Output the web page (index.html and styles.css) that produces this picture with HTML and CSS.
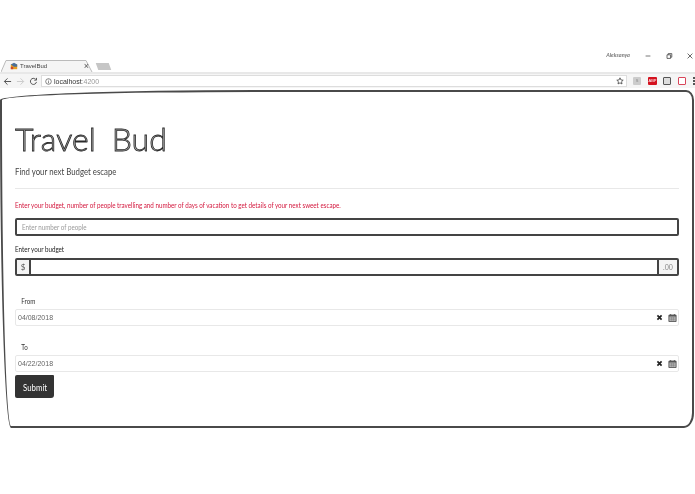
FILE: index.html
```html
<!DOCTYPE html>
<html lang="en">
<head>
<meta charset="utf-8">
<title>TravelBud</title>
<link rel="stylesheet" href="styles.css">
</head>
<body>
<div class="tabbar">
  <div class="tab">
    <svg class="tab-shape" viewBox="0 0 94 12"><path d="M0 12 5 .5H85L91 12" fill="#f5f5f5" stroke="#bbb"/></svg>
    <svg class="favicon" viewBox="0 0 10 10"><rect x="1" y="3" width="8" height="6" fill="#e9a023"/><path d="M1 3 5 1l4 2v3H5z" fill="#4a6f96"/><rect x="1" y="6" width="3" height="3" fill="#c9452c"/></svg>
    <span class="tab-title">TravelBud</span>
    <span class="tab-close">×</span>
  </div>
  <div class="new-tab"></div>
  <div class="win-user">Aleksanya</div>
  <div class="win-controls">
    <svg viewBox="0 0 10 10"><path d="M2 5h6" stroke="#555" fill="none"/></svg>
    <svg viewBox="0 0 10 10"><path d="M2.5 3.5h4.5v4.5h-4.500zM4 3.500v-1.500h4.500v4.500h-1.500" stroke="#444" fill="none"/></svg>
    <svg viewBox="0 0 10 10"><path d="M2 2l6 6M8 2l-6 6" stroke="#444" fill="none"/></svg>
  </div>
</div>
<div class="toolbar">
  <svg class="nav" viewBox="0 0 10 10"><path d="M9 5H1.500M5 1.500 1.500 5 5 8.500" stroke="#555" stroke-width="1.100" fill="none"/></svg>
  <svg class="nav" viewBox="0 0 10 10"><path d="M1 5h7.500M5 1.500 8.500 5 5 8.500" stroke="#ccc" stroke-width="1.100" fill="none"/></svg>
  <svg class="nav" viewBox="0 0 10 10"><path d="M8.300 5.500A3.400 3.400 0 1 1 7.400 2.500M8.300 1v2.500H5.800" stroke="#555" stroke-width="1.100" fill="none"/></svg>
  <div class="omnibox">
    <svg class="info" viewBox="0 0 10 10"><circle cx="5" cy="5" r="4" stroke="#555" fill="none"/><path d="M5 4.500v3M5 2.500v1" stroke="#555"/></svg>
    <span class="url">localhost<span class="port">:4200</span></span>
    <svg class="star" viewBox="0 0 10 10"><path d="M5 1l1.200 2.700 2.800.3-2.100 1.900.6 2.800L5 7.300 2.500 8.700l.6-2.800L1 4l2.800-.3z" stroke="#444" fill="none"/></svg>
  </div>
  <div class="ext ext-grey">S</div>
  <div class="ext ext-red">ABP</div>
  <div class="ext ext-dark"></div>
  <div class="ext ext-pocket"></div>
  <div class="menu-dots"><i></i><i></i><i></i></div>
</div>
<main class="card">
  <h1 class="title">Travel Bud</h1>
  <p class="lead narrow">Find your next Budget escape</p>
  <hr class="rule">
  <p class="notice narrow">Enter your budget, number of people travelling and number of days of vacation to get details of your next sweet escape.</p>
  <div class="sketch-input people"><span class="narrow">Enter number of people</span></div>
  <label class="budget-label narrow">Enter your budget</label>
  <div class="budget-group">
    <span class="addon addon-left">$</span>
    <span class="budget-field"></span>
    <span class="addon addon-right">.00</span>
  </div>
  <label class="date-label first narrow">From</label>
  <div class="date-input">
    <span>04/08/2018</span>
    <svg class="clear" viewBox="0 0 10 10"><path d="M2 2l6 6M8 2l-6 6" stroke="#222" stroke-width="2.400" fill="none"/></svg>
    <svg class="cal" viewBox="0 0 10 10"><path d="M1 2.500h8v7H1z" fill="#bbb" stroke="#555"/><path d="M1 2h8v2H1zM2.500 1h1v1.500h-1zM6.500 1h1v1.500h-1z" fill="#555"/><path d="M2 5.500h6M2 7.500h6M4 4.500v4M6 4.500v4" stroke="#777" stroke-width=".6"/></svg>
  </div>
  <label class="date-label second narrow">To</label>
  <div class="date-input">
    <span>04/22/2018</span>
    <svg class="clear" viewBox="0 0 10 10"><path d="M2 2l6 6M8 2l-6 6" stroke="#222" stroke-width="2.400" fill="none"/></svg>
    <svg class="cal" viewBox="0 0 10 10"><path d="M1 2.500h8v7H1z" fill="#bbb" stroke="#555"/><path d="M1 2h8v2H1zM2.500 1h1v1.500h-1zM6.500 1h1v1.500h-1z" fill="#555"/><path d="M2 5.500h6M2 7.500h6M4 4.500v4M6 4.500v4" stroke="#777" stroke-width=".6"/></svg>
  </div>
  <button class="submit" type="button"><span class="narrow">Submit</span></button>
</main>
</body>
</html>
```
FILE: styles.css
```css
* { box-sizing: border-box; }
html, body { margin: 0; background: #fff; }
body {
  width: 695px;
  height: 494px;
  overflow: hidden;
  font-family: Lato, sans-serif;
  color: #333;
}
.narrow {
  display: block;
  white-space: nowrap;
  transform: scaleX(.78);
  transform-origin: left center;
}
.tabbar {
  height: 12px;
  margin-top: 60px;
  display: flex;
  align-items: flex-end;
  padding-left: 1px;
  position: relative;
  will-change: transform;
}
.tab {
  width: 94px;
  height: 12px;
  display: flex;
  align-items: center;
  padding-left: 9px;
  position: relative;
  font-family: "Liberation Sans", sans-serif;
}
.tab-shape { position: absolute; left: 0; top: 0; width: 94px; height: 12px; }
.favicon { width: 8px; height: 8px; margin-right: 2px; position: relative; }
.tab-title { font-size: 6px; color: #444; flex: 1; position: relative; }
.tab-close { font-size: 9px; line-height: 9px; color: #555; margin-right: 6px; position: relative; }
.new-tab {
  width: 13px;
  height: 7px;
  margin: 0 0 2px 2px;
  background: #c6c6c6;
  transform: skewX(20deg);
}
.win-user {
  margin-left: auto;
  align-self: flex-start;
  margin-top: -8px;
  font-size: 5.500px;
  font-weight: 700;
  font-style: italic;
  color: #777;
}
.win-controls {
  display: flex;
  gap: 13px;
  margin: -8px 1px 0 14px;
  align-self: flex-start;
}
.win-controls svg { width: 8px; height: 8px; display: block; }
.toolbar {
  height: 16px;
  background: linear-gradient(#e8e8e8 2px, #f5f5f5 2px);
  display: flex;
  align-items: center;
  padding: 2px 0 0 3px;
  gap: 3px;
  will-change: transform;
}
.nav { width: 9px; height: 9px; flex: none; margin-right: 1px; }
.nav + .omnibox { margin-left: -1px; }
.omnibox {
  width: 591px;
  height: 12px;
  background: #fff;
  border: 1px solid #ddd;
  display: flex;
  align-items: center;
  padding: 0 1px 0 3px;
  font-family: "Liberation Sans", sans-serif;
  font-size: 7px;
}
.info { width: 7px; height: 7px; margin-right: 2px; }
.url { color: #333; flex: 1; }
.port { color: #999; }
.star { width: 8px; height: 8px; margin-right: 1px; }
.ext {
  width: 8px;
  height: 8px;
  flex: none;
  margin-left: 3px;
  margin-right: 1px;
  font: 4px/8px "Liberation Sans", sans-serif;
  text-align: center;
  border-radius: 1px;
}
.ext-grey { background: #ccc; color: #888; }
.ext-red { background: #d4121f; color: #fff; width: 9px; margin-right: 0; }
.ext-dark { background: #ddd; border: 1px solid #555; }
.ext-pocket { background: #fff; border: 1px solid #d9455a; }
.menu-dots { display: flex; flex-direction: column; gap: 1px; margin-left: 3px; }
.menu-dots i { width: 2px; height: 2px; background: #555; }
.card {
  margin: 2px 0 0;
  width: 694px;
  height: 338px;
  border: 2px solid #4a4a4a;
  border-top-left-radius: 255px 10px;
  border-top-right-radius: 8px 10px;
  border-bottom-right-radius: 10px 15px;
  border-bottom-left-radius: 11px 320px;
  padding: 0 13px 0 13px;
  display: flex;
  flex-direction: column;
  will-change: transform;
}
.title {
  margin: 27px 0 0;
  font-family: Lato, sans-serif;
  font-weight: 300;
  font-size: 32px;
  line-height: 40px;
  letter-spacing: .1px;
  word-spacing: 7px;
  color: #aaa;
  -webkit-text-stroke: .8px #2a2a2a;
}
.lead { margin: 6px 0 0; font-size: 10px; line-height: 12px; color: #444; }
.rule { width: 100%; margin: 11px 0 0; border: 0; border-top: 1px solid #e8e8e8; }
.notice { margin: 11px 0 0; font-size: 8px; line-height: 10px; color: #d3163c; }
.sketch-input {
  margin-top: 8px;
  height: 18px;
  border: 2px solid #444;
  border-radius: 2px;
  padding-left: 5px;
  font-size: 8px;
  line-height: 14px;
  color: #999;
}
.budget-label { margin-top: 8px; font-size: 8px; line-height: 10px; color: #222; }
.budget-group {
  margin-top: 4px;
  height: 18px;
  display: flex;
  border: 2px solid #444;
  border-radius: 2px;
}
.addon {
  width: 14px;
  background: #f4f4f4;
  font-size: 8px;
  line-height: 14px;
  text-align: center;
  color: #555;
  flex: none;
}
.addon-left { border-right: 2px solid #444; }
.addon-right { width: 20px; border-left: 2px solid #444; color: #888; font-size: 7px; }
.budget-field { flex: 1; }
.date-label { padding-left: 8px; font-size: 8px; line-height: 10px; color: #333; }
.date-label.first { margin-top: 20px; }
.date-label.second { margin-top: 16px; }
.date-input {
  margin-top: 3px;
  height: 17px;
  border: 1px solid #e8e8e8;
  border-radius: 2px;
  display: flex;
  align-items: center;
  padding: 0 1px 0 2px;
  font-family: "Liberation Sans", sans-serif;
  font-size: 7px;
  color: #666;
}
.date-input > span { flex: 1; }
.clear { width: 7px; height: 7px; margin-right: 5px; }
.cal { width: 9px; height: 9px; }
.submit {
  width: 39px;
  height: 23px;
  margin-top: 3px;
  padding: 0 0 0 8px;
  background: #333;
  border: 0;
  border-radius: 2px 1px 3px 2px;
  color: #fff;
  font: 10px Lato, sans-serif;
}
```
